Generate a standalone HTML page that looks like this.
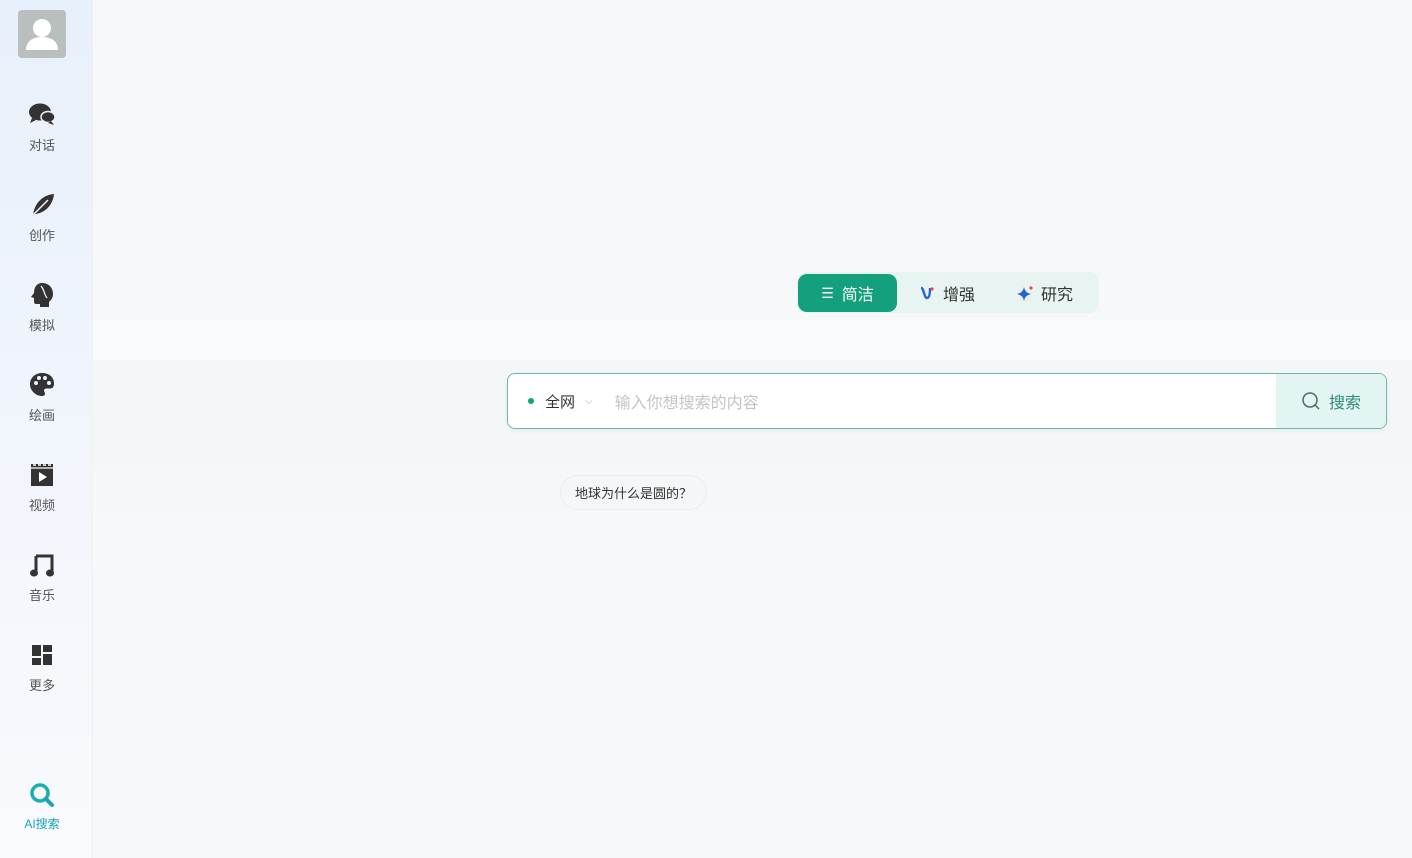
<!DOCTYPE html>
<html><head><meta charset="utf-8"><style>
*{margin:0;padding:0;box-sizing:border-box}
body{width:1412px;height:858px;overflow:hidden;background:#f7f8fa;font-family:"Liberation Sans","Noto Sans CJK SC",sans-serif;position:relative}
.side{position:absolute;left:0;top:0;width:93px;height:858px;background:linear-gradient(180deg,#e8f0fb 0%,#f1f5fc 50%,#f9fafd 100%);border-right:1px solid #eef0f4}
.av{position:absolute;left:18px;top:10px;width:48px;height:48px;border-radius:4px;background:#b9bfbd;overflow:hidden}
.item{position:absolute;left:0;width:84px;text-align:center;font-size:13px;color:#555}
.item svg{display:block;margin:0 auto 7px}
.band{position:absolute;left:93px;right:0}
.tabs{position:absolute;left:797px;top:272px;width:302px;height:41px;background:#e8f4f2;border-radius:10px}
.tab{position:absolute;top:2px;height:38px;display:flex;align-items:center;font-size:16px;color:#333}
.search{position:absolute;left:507px;top:373px;width:880px;height:56px;border:1px solid #6bb7b0;border-radius:8px;background:#fff;overflow:hidden;box-shadow:0 2px 6px rgba(0,0,0,.05)}
.sbtn{position:absolute;right:0;top:0;width:110px;height:100%;background:#e3f5f2;display:flex;align-items:center;justify-content:center;color:#2d8a78;font-size:16px;gap:8px}
.chip{position:absolute;left:560px;top:475px;width:147px;height:35px;border-radius:18px;background:#f5f6f7;border:1px solid #ececec;font-size:13px;color:#333;display:flex;align-items:center;justify-content:center}
</style></head><body>
<div class="band" style="top:320px;height:40px;background:#f9fafb"></div>
<div class="band" style="top:360px;height:110px;background:#f5f6f7"></div>
<div class="band" style="top:470px;height:45px;background:#f6f7f8"></div>
<div class="side">
<div class="av"><svg width="48" height="48" viewBox="0 0 48 48"><circle cx="24" cy="18" r="9" fill="#fff"/><path d="M8 40c0-9 7-13 16-13s16 4 16 13z" fill="#fff"/></svg></div>
<div class="item" style="top:102px"><svg width="28" height="26" viewBox="0 0 28 26"><ellipse cx="12" cy="10" rx="11" ry="8.5" fill="#333"/><path d="M4 16l-2 5 6-3z" fill="#333"/><ellipse cx="20" cy="15" rx="7" ry="5.5" fill="#333" stroke="#eef3fb" stroke-width="1.5"/><path d="M23 19l3 4-6-2z" fill="#333"/></svg>对话</div>
<div class="item" style="top:192px"><svg width="28" height="26" viewBox="0 0 28 26"><path d="M5 24C6 12 14 3 26 2c-1 10-8 19-19 20z" fill="#333"/><path d="M3 25L20 8" stroke="#eef3fb" stroke-width="1.5"/></svg>创作</div>
<div class="item" style="top:282px"><svg width="28" height="26" viewBox="0 0 28 26"><path d="M14 1c7 0 11 5 11 11 0 4-2 6-4 8v5H12v-3H8c-2 0-2-2-2-3v-3l-3-1 3-4C6 5 9 1 14 1z" fill="#333"/><path d="M13 4c3 3 3 8 6 12" stroke="#eef3fb" stroke-width="1.3" fill="none"/></svg>模拟</div>
<div class="item" style="top:372px"><svg width="28" height="26" viewBox="0 0 28 26"><path d="M14 1C7 1 2 6 2 12c0 7 6 12 12 12 2 0 3-1 3-2.5 0-1-1-2-1-3s1-2 2.5-2H22c3 0 4-2 4-5C26 5 21 1 14 1z" fill="#333"/><circle cx="8" cy="11" r="2" fill="#eef3fb"/><circle cx="11" cy="6" r="2" fill="#eef3fb"/><circle cx="17" cy="6" r="2" fill="#eef3fb"/><circle cx="21" cy="11" r="2" fill="#eef3fb"/></svg>绘画</div>
<div class="item" style="top:462px"><svg width="28" height="26" viewBox="0 0 28 26"><rect x="3" y="2" width="22" height="22" fill="#333"/><path d="M5 3h3M10 3h3M15 3h3M20 3h3" stroke="#fff" stroke-width="1.5"/><path d="M3 6h22" stroke="#fff" stroke-width="1.2"/><path d="M11 10v10l8-5z" fill="#fff"/></svg>视频</div>
<div class="item" style="top:552px"><svg width="28" height="26" viewBox="0 0 28 26"><path d="M8 4h16v17" stroke="#333" stroke-width="3" fill="none"/><path d="M8 4v17" stroke="#333" stroke-width="3"/><ellipse cx="6" cy="21" rx="4" ry="3.5" fill="#333"/><ellipse cx="22" cy="21" rx="4" ry="3.5" fill="#333"/></svg>音乐</div>
<div class="item" style="top:642px"><svg width="28" height="26" viewBox="0 0 28 26"><rect x="4" y="3" width="9" height="11" fill="#333"/><rect x="4" y="16" width="9" height="7" fill="#333"/><rect x="15" y="3" width="9" height="7" fill="#333"/><rect x="15" y="12" width="9" height="11" fill="#333"/></svg>更多</div>
<div class="item" style="top:782px;color:#1aa3b5;font-size:12px"><svg width="28" height="26" viewBox="0 0 28 26"><circle cx="12" cy="11" r="8" stroke="#1ab0b0" stroke-width="3.5" fill="none"/><path d="M18 17l6 6" stroke="#1aa3b5" stroke-width="4" stroke-linecap="round"/></svg>AI搜索</div>
</div>
<div class="tabs">
<div class="tab" style="left:1px;width:99px;background:#14a07c;color:#fff;border-radius:9px;justify-content:center;gap:8px"><span style="font-size:14px">☰</span>简洁</div>
<div class="tab" style="left:122px;gap:8px"><svg width="16" height="16" viewBox="0 0 16 16"><path d="M2 3c3 0 3 10 6 10s3-8 3-10" stroke="#2563d6" stroke-width="2.4" fill="none"/><circle cx="13" cy="4" r="1.6" fill="#e44"/></svg>增强</div>
<div class="tab" style="left:220px;gap:8px"><svg width="16" height="16" viewBox="0 0 16 16"><path d="M7 2Q8 8 14 9 8 10 7 16 6 10 0 9 6 8 7 2z" fill="#2563d6"/><circle cx="14" cy="3" r="1.6" fill="#e44"/></svg>研究</div>
</div>
<div class="search">
<div style="position:absolute;left:20px;top:0;height:100%;display:flex;align-items:center;font-size:15px;color:#333"><span style="width:6px;height:6px;border-radius:50%;background:#14a07c;margin-right:11px"></span>全网<span style="color:#aaa;font-size:10px;margin-left:10px">⌵</span><span style="color:#c4c4c4;margin-left:22px;font-size:16px">输入你想搜索的内容</span></div>
<div class="sbtn"><svg width="20" height="20" viewBox="0 0 20 20"><circle cx="9" cy="9" r="7" stroke="#4c6b66" stroke-width="1.5" fill="none"/><path d="M14 14l4 4" stroke="#4c6b66" stroke-width="1.5"/></svg>搜索</div>
</div>
<div class="chip">地球为什么是圆的？</div>
</body></html>
